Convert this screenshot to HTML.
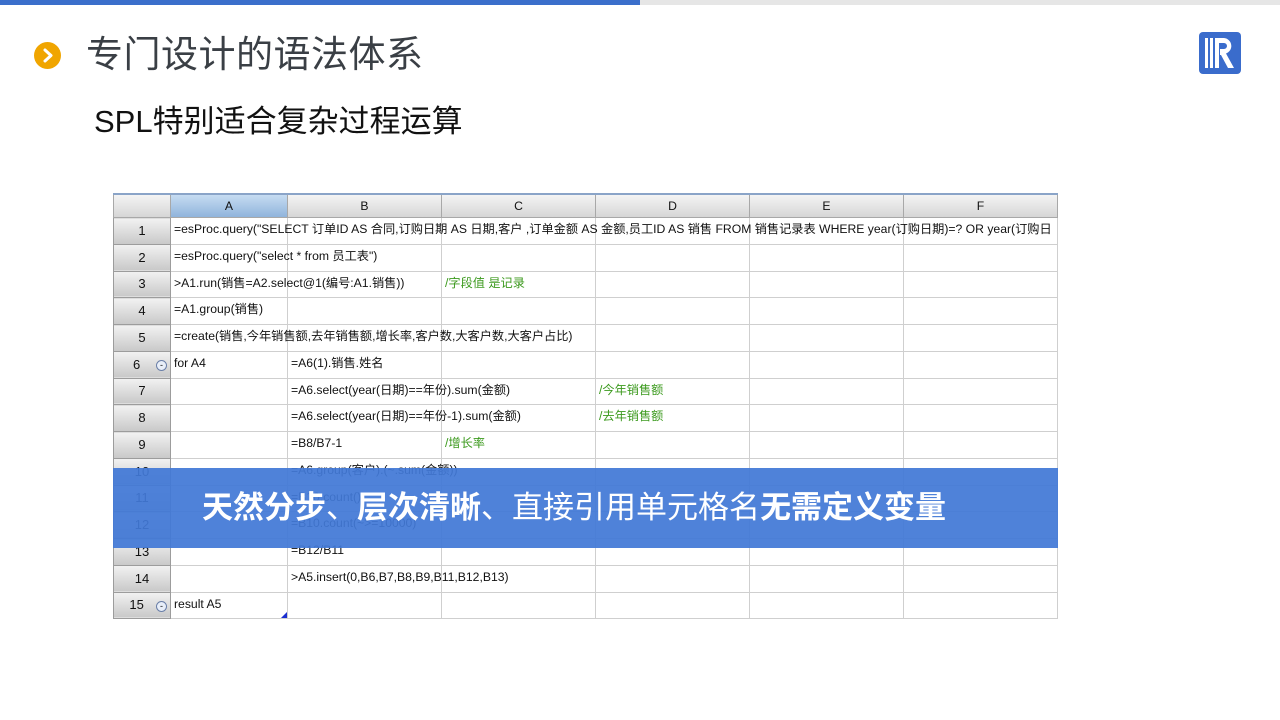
<!DOCTYPE html>
<html><head><meta charset="utf-8"><style>
body{margin:0;width:1280px;height:720px;background:#fff;position:relative;overflow:hidden;font-family:"Liberation Sans","Noto Sans CJK SC",sans-serif}
.bar1{position:absolute;left:0;top:0;width:640px;height:5px;background:#3b6fcb}
.bar2{position:absolute;left:640px;top:0;width:640px;height:5px;background:#e6e6e6}
.dot{position:absolute;left:34px;top:42px;width:27px;height:27px;border-radius:50%;background:#f0a500}
h1{position:absolute;left:86px;top:30px;margin:0;font-weight:normal;font-size:37px;color:#3a3f45;line-height:50px;letter-spacing:0.5px}
h2{position:absolute;left:94px;top:101px;margin:0;font-weight:normal;font-size:31px;color:#111;line-height:42px}
table{position:absolute;left:113px;top:193px;width:944px;border-collapse:collapse;table-layout:fixed;font-size:12.2px;color:#111;border-top:2px solid #8aa4c8}
td{border:1px solid #cfcfcf;height:26.75px;padding:0 0 0 3px;white-space:nowrap;overflow:visible;vertical-align:top;line-height:20px;padding-top:1px;box-sizing:border-box}
tr.h td{height:23px;background:linear-gradient(#f4f4f4,#d6d6d6);text-align:center;padding:0;line-height:22px;border-color:#a8a8a8;vertical-align:middle}
tr.h td.a{background:linear-gradient(#c6dcf2,#90b4dc)}
td.n{background:linear-gradient(#f2f2f2,#c8c8c8);text-align:center;padding:0;line-height:24px;border-color:#9c9c9c;font-size:13px;vertical-align:middle;position:relative}
.g{color:#3c9a1e}
.m{display:inline-block;width:9px;height:9px;border:1px solid #6a7fa8;border-radius:50%;background:#e8eef8;position:absolute;right:3px;top:8px;font-size:9px;line-height:8px}
.ov{position:absolute;left:113px;top:468px;width:945px;height:80px;background:rgba(66,120,214,0.93);color:#fff;font-size:31px;line-height:80px;padding-left:89px;box-sizing:border-box}
.ov b{font-weight:bold}
</style></head><body>
<div class="bar1"></div><div class="bar2"></div>
<div class="dot"><svg width="27" height="27"><path d="M11 8l6 5.5-6 5.5" stroke="#fff" stroke-width="3" fill="none" stroke-linecap="round" stroke-linejoin="round"/></svg></div>
<h1>专门设计的语法体系</h1>
<h2>SPL特别适合复杂过程运算</h2>
<svg style="position:absolute;left:1199px;top:32px" width="42" height="42"><rect width="42" height="42" rx="4" fill="#3a6ccc"/><rect x="6" y="6" width="3" height="30" fill="#fff"/><rect x="11" y="6" width="3" height="30" fill="#fff"/><path d="M16 6h9a8 8 0 0 1 2 15.5L35 36h-6l-7-13h-1v-6h4a3 3 0 0 0 0-6h-5v25h-4z" fill="#fff"/></svg>
<table>
<colgroup><col style="width:57px"><col style="width:117px"><col style="width:154px"><col style="width:154px"><col style="width:154px"><col style="width:154px"><col style="width:154px"></colgroup>
<tr class="h"><td></td><td class="a">A</td><td>B</td><td>C</td><td>D</td><td>E</td><td>F</td></tr>
<tr><td class="n">1</td><td>=esProc.query("SELECT 订单ID AS 合同,订购日期 AS 日期,客户 ,订单金额 AS 金额,员工ID AS 销售 FROM 销售记录表 WHERE year(订购日期)=? OR year(订购日</td><td></td><td></td><td></td><td></td><td></td></tr>
<tr><td class="n">2</td><td>=esProc.query("select * from 员工表")</td><td></td><td></td><td></td><td></td><td></td></tr>
<tr><td class="n">3</td><td>&gt;A1.run(销售=A2.select@1(编号:A1.销售))</td><td></td><td class="g">/字段值 是记录</td><td></td><td></td><td></td></tr>
<tr><td class="n">4</td><td>=A1.group(销售)</td><td></td><td></td><td></td><td></td><td></td></tr>
<tr><td class="n">5</td><td>=create(销售,今年销售额,去年销售额,增长率,客户数,大客户数,大客户占比)</td><td></td><td></td><td></td><td></td><td></td></tr>
<tr><td class="n">6 &nbsp;&nbsp;<span class="m">-</span></td><td>for A4</td><td>=A6(1).销售.姓名</td><td></td><td></td><td></td><td></td></tr>
<tr><td class="n">7</td><td></td><td>=A6.select(year(日期)==年份).sum(金额)</td><td></td><td class="g">/今年销售额</td><td></td><td></td></tr>
<tr><td class="n">8</td><td></td><td>=A6.select(year(日期)==年份-1).sum(金额)</td><td></td><td class="g">/去年销售额</td><td></td><td></td></tr>
<tr><td class="n">9</td><td></td><td>=B8/B7-1</td><td class="g">/增长率</td><td></td><td></td><td></td></tr>
<tr><td class="n">10</td><td></td><td>=A6.group(客户).(~.sum(金额))</td><td></td><td></td><td></td><td></td></tr>
<tr><td class="n">11</td><td></td><td>=B10.count()</td><td></td><td></td><td></td><td></td></tr>
<tr><td class="n">12</td><td></td><td>=B10.count(~&gt;=10000)</td><td></td><td></td><td></td><td></td></tr>
<tr><td class="n">13</td><td></td><td>=B12/B11</td><td></td><td></td><td></td><td></td></tr>
<tr><td class="n">14</td><td></td><td>&gt;A5.insert(0,B6,B7,B8,B9,B11,B12,B13)</td><td></td><td></td><td></td><td></td></tr>
<tr><td class="n">15 &nbsp;&nbsp;<span class="m">-</span></td><td style="position:relative">result A5<svg style="position:absolute;right:0;bottom:0" width="6" height="6"><path d="M6 0V6H0z" fill="#1a2fd0"/></svg></td><td></td><td></td><td></td><td></td><td></td></tr>
</table>
<div class="ov"><b>天然分步</b>、<b>层次清晰</b>、直接引用单元格名<b>无需定义变量</b></div>
</body></html>
